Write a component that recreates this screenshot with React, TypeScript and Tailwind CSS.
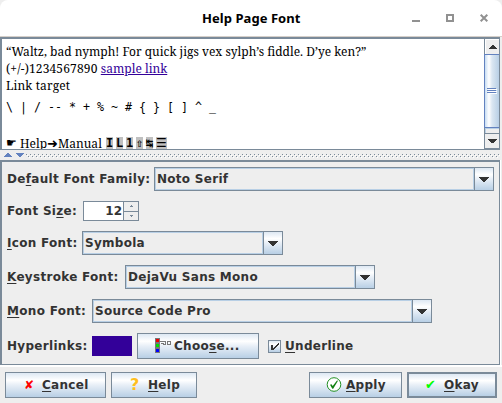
import React, { ReactNode } from "react";

const sans = "font-['DejaVu_Sans',sans-serif] text-[12px] leading-[16px] text-[#333333] whitespace-nowrap";
const gradient = "bg-[linear-gradient(to_bottom,#dde8f3_0%,#ffffff_30%,#e8eff7_50%,#b8cfe5_100%)]";

function Key({ children }: { children: ReactNode }) {
  return <span className="underline decoration-1 underline-offset-2">{children}</span>;
}

function DownArrow() {
  return (
    <svg width="10" height="5" viewBox="0 0 10 5" shapeRendering="crispEdges" fill="#333">
      <path d="M0 0h10v1h-1v1h-1v1h-1v1h-1v1h-2v-1h-1v-1h-1v-1h-1v-1h-1z" />
    </svg>
  );
}

function Combo({ width, value }: { width: string; value: string }) {
  return (
    <div className={"flex h-6 border border-[#7a8a99] " + width}>
      <div className="flex flex-1 items-center border border-[#b8cfe5] pl-px pb-px">
        <span className={sans + " font-bold tracking-[0.28px]"}>{value}</span>
      </div>
      <div className={"flex w-[19px] items-center justify-center border-l border-[#7a8a99] pt-px " + gradient}>
        <DownArrow />
      </div>
    </div>
  );
}

function Label({ children, width, tracking = "tracking-[0.3px]" }: { children: ReactNode; width: string; tracking?: string }) {
  return <label className={sans + " font-bold " + tracking + " " + width}>{children}</label>;
}

function Button({ width, children, strong }: { width: string; children: ReactNode; strong?: boolean }) {
  return (
    <button className={"flex h-[26px] items-center border-[#7a8a99] font-bold tracking-[0.3px] " + (strong ? "border-2 " : "border ") + sans + " " + gradient + " " + width}>
      {children}
    </button>
  );
}

function TitleBar() {
  return (
    <header className="flex h-[37px] items-center rounded-t-lg border-b border-[#d5cfc9] bg-white">
      <h1 className="ml-[202px] w-[210px] whitespace-nowrap font-['Noto_Sans',sans-serif] text-[13px] font-bold leading-5 tracking-[0.05px] text-black">Help Page Font</h1>
      <svg width="80" height="8" viewBox="0 0 80 8" fill="none" stroke="#919191" strokeWidth="2">
        <path d="M0 7h8" />
        <path d="M35 1h6v6h-6z" />
        <path d="M68.7.7l6.6 6.6M75.3.7l-6.6 6.6" />
      </svg>
    </header>
  );
}

function ScrollBar() {
  return (
    <div className="flex w-4 flex-col border-x border-[#7a8a99] bg-[#eeeeee]">
      <div className="flex h-[15px] items-center justify-center border-l border-t border-white">
        <svg width="8" height="4" viewBox="0 0 8 4" shapeRendering="crispEdges" fill="#333"><path d="M3 0h2v1h1v1h1v1h1v1H0V3h1V2h1V1h1z" /></svg>
      </div>
      <div className="-ml-px flex h-[74px] flex-col items-center justify-center border-y border-l border-[#6382bf] bg-[linear-gradient(to_right,#c8ddf2,#ffffff_28%,#dbe7f2_50%,#b8cfe5)]">
        <svg width="10" height="6" viewBox="0 0 10 6" shapeRendering="crispEdges"><path d="M0 0h9v1H0zM0 2h9v1H0zM0 4h9v1H0z" fill="#6382bf" /><path d="M1 1h9v1H1zM1 3h9v1H1zM1 5h9v1H1z" fill="#fff" /></svg>
      </div>
      <div className="h-[5px] border-l border-t border-[#b8cfe5]" />
      <div className="flex h-4 items-center justify-center border-y border-[#7a8a99]">
        <svg width="9" height="4" viewBox="0 0 9 4" shapeRendering="crispEdges" fill="#333"><path d="M0 0h9v1H8v1H7v1H6v1H3V3H2V2H1V1H0z" /></svg>
      </div>
    </div>
  );
}

function Keycap({ children, wide }: { children: ReactNode; wide?: boolean }) {
  return <span className={"ml-[3px] flex h-[13px] items-center justify-center bg-[#c0c0c0] font-['DejaVu_Sans_Mono','DejaVu_Sans',monospace] text-[12px] leading-[13px] " + (wide ? "w-[11px] font-normal" : "w-[7px] font-bold")}>{children}</span>;
}

function Preview() {
  return (
    <section className="flex h-[113px] w-[500px] border-b border-l-2 border-t-2 border-[#7a8a99] bg-white">
      <div className="flex-1 overflow-hidden whitespace-nowrap pl-1 pt-1 font-['Noto_Serif','DejaVu_Serif_Condensed','DejaVu_Serif',serif] text-[12px] leading-[17px] text-black">
        <p>“Waltz, bad nymph! For quick jigs vex sylph’s fiddle. D’ye ken?”</p>
        <p><span className="tracking-[0.15px]">(+/-)1234567890 </span><a className="text-[#330099] underline">sample link</a></p>
        <p className="tracking-[0.1px]">Link target</p>
        <p className="mt-[5px] font-['DejaVu_Sans_Mono',monospace] text-[11.63px]">{"\\ | / -- * + % ~ # { } [ ] ^ _"}</p>
        <div className="mt-[19px] flex h-[17px] items-center">
          <span className="w-[14px] font-['DejaVu_Sans',sans-serif] text-[12px]">☛</span>
          <span className="w-[27px]">Help</span>
          <span className="w-[11px] font-['DejaVu_Sans',sans-serif] text-[13px]">➜</span>
          <span className="w-[45px]">Manual</span>
          <Keycap>I</Keycap><Keycap>L</Keycap><Keycap>1</Keycap><Keycap>⇧</Keycap><Keycap>↹</Keycap><Keycap wide>☰</Keycap>
        </div>
      </div>
      <ScrollBar />
    </section>
  );
}

function Divider() {
  return (
    <div className="flex h-[10px] items-center bg-[#eeeeee]">
      <svg width="502" height="10" viewBox="0 0 502 10" shapeRendering="crispEdges">
        <defs><pattern id="bumps" width="4" height="4" patternUnits="userSpaceOnUse" x="2" y="4"><path d="M0 0h1v1H0zM2 2h1v1H2z" fill="#7a8a99" /><path d="M1 1h1v1H1zM3 3h1v1H3z" fill="#fff" /></pattern></defs>
        <path d="M26 4h474v4H26z" fill="url(#bumps)" />
        <path d="M4 7h8v-1h-1v-1h-1v-1H9V3H7v1H6v1H5v1H4z" fill="#6382bf" />
        <path d="M16 3h8v1h-1v1h-1v1h-1v1h-2V6h-1V5h-1V4h-1z" fill="#6382bf" />
      </svg>
    </div>
  );
}

function Settings() {
  return (
    <section className="h-[205px] w-[500px] border-b border-l-2 border-r border-t-2 border-[#7a8a99] pl-[5px] pt-[5px] shadow-[1px_0_0_#fff]">
      <div className="flex h-6 items-center"><Label width="w-[147px]">De<Key>f</Key>ault Font Family:</Label><Combo width="w-[340px]" value="Noto Serif" /></div>
      <div className="mt-[10px] flex h-5 items-center">
        <Label width="w-[76px]">Font Si<Key>z</Key>e:</Label>
        <div className="flex h-5 w-14 border border-[#7a8a99] bg-white">
          <span className={sans + " w-[39px] pr-px pt-px text-right font-bold"}>12</span>
          <div className="flex w-[15px] flex-col border-l border-[#7a8a99] bg-[#eeeeee]">
            <div className="flex flex-1 items-center justify-center border-b border-[#7a8a99]"><svg width="3" height="2" viewBox="0 0 3 2" shapeRendering="crispEdges" fill="#7a8a99"><path d="M1 0h1v1h1v1H0V1h1z" /></svg></div>
            <div className="flex flex-1 items-center justify-center"><svg width="3" height="2" viewBox="0 0 3 2" shapeRendering="crispEdges" fill="#7a8a99"><path d="M0 0h3v1H2v1H1V1H0z" /></svg></div>
          </div>
        </div>
      </div>
      <div className="mt-[10px] flex h-6 items-center"><Label width="w-[75px]"><Key>I</Key>con Font:</Label><Combo width="w-[201px]" value="Symbola" /></div>
      <div className="mt-[10px] flex h-6 items-center"><Label width="w-[118px]"><Key>K</Key>eystroke Font:</Label><Combo width="w-[250px]" value="DejaVu Sans Mono" /></div>
      <div className="mt-[10px] flex h-6 items-center"><Label width="w-[85px]"><Key>M</Key>ono Font:</Label><Combo width="w-[340px]" value="Source Code Pro" /></div>
      <div className="mt-[10px] flex h-[26px] items-center">
        <Label width="w-[85px]">Hyperlinks:</Label>
        <div className="h-5 w-10 bg-[#330099]" />
        <div className="ml-[5px]">
          <Button width="w-[122px]">
            <svg className="ml-[17px] mr-[3px]" width="16" height="16" viewBox="0 0 16 16" shapeRendering="crispEdges">
              <path d="M0 0h5v15H0z" fill="#777" /><path d="M1 1h3v3H1z" fill="#f00000" /><path d="M1 6h3v3H1z" fill="#00e000" /><path d="M1 11h3v3H1z" fill="#00f" />
              <path d="M5 3h5v1H5zM6 5h3v1H6zM8 6h3v1H8zM10 3h1v3h-1zM12 3h4v1h-4zM12 6h4v1h-4zM12 4h1v2h-1zM15 4h1v2h-1z" fill="#777" />
            </svg>
            <span>Choo<Key>s</Key>e...</span>
          </Button>
        </div>
        <div className={"ml-[9px] mr-1 flex size-[13px] items-center justify-center border border-[#7a8a99] " + gradient}>
          <svg width="9" height="9" viewBox="0 0 9 9" shapeRendering="crispEdges" fill="#333"><path d="M1 3h2v3h1V5h1V4h1V3h1V2h1V1h1v2H8v1H7v1H6v1H5v1H4v1H1z" /></svg>
        </div>
        <Label width="w-[80px]"><Key>U</Key>nderline</Label>
      </div>
    </section>
  );
}

export default function App() {
  return (
    <main className="h-[403px] w-[502px] overflow-hidden bg-[#eeeeee]">
      <TitleBar />
      <Preview />
      <Divider />
      <Settings />
      <footer className="flex border-t-2 border-white px-[5px] pt-[5px]">
        <Button width="w-[101px]"><span className="ml-[18px] w-[18px] text-left text-[12px] text-[#ff0000]">✘</span><span><Key>C</Key>ancel</span></Button>
        <div className="ml-[5px]"><Button width="w-[86px]"><span className="ml-[18px] w-[18px] text-left text-[16px] text-[#ffbf1f]">?</span><span><Key>H</Key>elp</span></Button></div>
        <div className="ml-auto"><Button width="w-[93px]">
          <svg className="ml-[16px] mr-[4px]" width="16" height="16" viewBox="0 0 16 16"><circle cx="8" cy="7.5" r="6.8" fill="white" stroke="#229022" strokeWidth="1" /><path d="M4 7.7l1.5-.5 1.2 1.7L11 3.5l1 .2-4.8 8H6.3z" fill="#118011" /></svg>
          <span><Key>A</Key>pply</span></Button></div>
        <div className="ml-[5px]"><Button strong width="w-[90px]"><span className="ml-[16px] w-[19px] text-left text-[13px] text-[#00ff00]">✔</span><span><Key>O</Key>kay</span></Button></div>
      </footer>
    </main>
  );
}
